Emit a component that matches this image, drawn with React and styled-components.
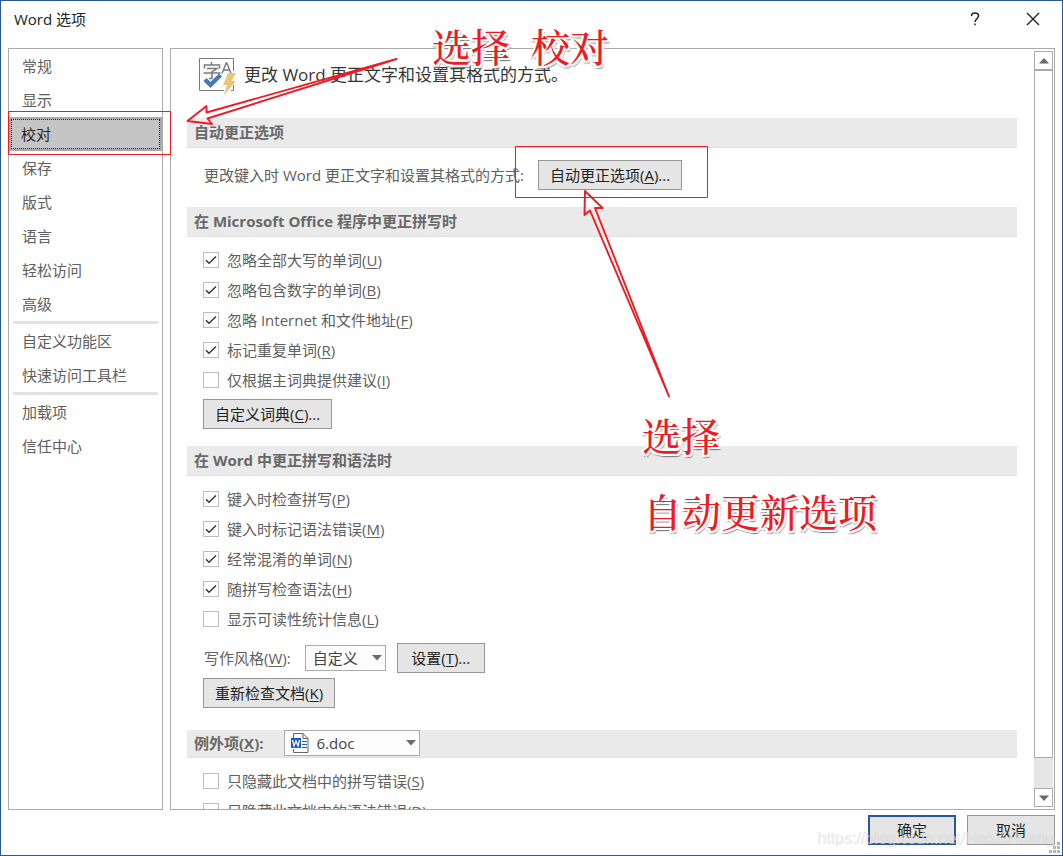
import React from "react";
import styled, { createGlobalStyle, css } from "styled-components";

const ui = `"Open Sans", "Noto Sans CJK SC", sans-serif`;

const GlobalStyle = createGlobalStyle`
  *, *::before, *::after { box-sizing: border-box; }
  body { margin: 0; background: #fff; }
  body, button, select, input { font-family: ${ui}; font-size: 15px; }
  u { text-decoration-thickness: 1px; text-underline-offset: 2px; }
`;

const Dialog = styled.main`
  position: relative;
  display: flex;
  flex-direction: column;
  height: 100vh;
  overflow: hidden;
  border: 1px solid #2b579a;
  background: #fff;
  color: #606060;
`;

const TitleBar = styled.header`
  display: flex;
  align-items: center;
  height: 47px;
  flex: none;
  padding: 0 15px 12px 13px;
`;

const Title = styled.h1`
  flex: 1;
  margin: 0;
  font-size: 15px;
  font-weight: 400;
  line-height: 20px;
  color: #222;
`;

const WindowButton = styled.button`
  display: flex;
  align-items: center;
  justify-content: center;
  width: 28px;
  height: 28px;
  margin-left: 30px;
  padding: 0;
  border: 0;
  background: none;
  color: #222;
`;

const Body = styled.div`
  display: flex;
  flex: 1;
  min-height: 0;
  gap: 7px;
  padding: 0 7px;
`;

const Nav = styled.nav`
  flex: none;
  width: 155px;
  border: 1px solid #ababab;
`;

const NavItem = styled.button`
  display: block;
  width: 100%;
  height: 34px;
  padding: 0 11px;
  border: 2px solid transparent;
  background: none;
  color: #606060;
  line-height: 30px;
  text-align: left;
  ${(p) =>
    p.$active &&
    css`
      padding-left: 10px;
      border-color: #ababab;
      background: #c5c5c5;
      color: #262626;
      outline: 1px dotted #222;
      outline-offset: -3px;
    `}
`;

const NavRule = styled.hr`
  height: 3px;
  margin: 0 4px;
  border: 0;
  background: #e2e2e2;
`;

const Pane = styled.div`
  display: flex;
  flex: 1;
  min-width: 0;
  border: 1px solid #ababab;
`;

const Content = styled.div`
  flex: 1;
  min-width: 0;
  overflow: hidden;
  padding: 0 17px 0 16px;
`;

const Intro = styled.div`
  display: flex;
  align-items: flex-start;
  gap: 5px;
  height: 69px;
  padding: 9px 12px 0;
  font-size: 17px;
  line-height: 34px;
  color: #363636;
  white-space: nowrap;
`;

const SectionBar = styled.h2`
  display: flex;
  align-items: center;
  gap: 20px;
  height: ${(p) => (p.$compact ? 28 : 30)}px;
  margin: 0;
  padding: 0 7px 2px;
  border-bottom: 1px solid #e0e0e0;
  background: #eaeaea;
  font-size: 15px;
  font-weight: 700;
  color: #686868;
`;

const SectionBody = styled.div`
  padding: ${(p) => p.$pad} 0 ${(p) => p.$end || "17px"} 16px;
`;

const Row = styled.div`
  display: flex;
  align-items: center;
  gap: 11px;
  height: 30px;
  margin-top: ${(p) => p.$top || 0}px;
  white-space: nowrap;
`;

const RowLabel = styled.label`
  padding: 0 3px 2px 1px;
`;

const PushButton = styled.button`
  height: 30px;
  padding: 0 11px;
  min-width: ${(p) => p.$min || 0}px;
  border: 1px solid #969696;
  background: #e5e5e5;
  color: #222;
  line-height: 28px;
  white-space: nowrap;
  ${(p) =>
    p.$primary &&
    css`
      border: 2px solid #2b579a;
      line-height: 26px;
    `}
`;

const CheckRow = styled.label`
  display: flex;
  align-items: center;
  gap: 8px;
  height: 30px;
  white-space: nowrap;
`;

const CheckText = styled.span`
  padding-bottom: 2px;
`;

const CheckWrap = styled.span`
  display: grid;
  width: 16px;
  height: 16px;
  > * {
    grid-area: 1 / 1;
  }
  svg {
    pointer-events: none;
  }
  input:not(:checked) + svg {
    visibility: hidden;
  }
`;

const CheckInput = styled.input`
  appearance: none;
  width: 16px;
  height: 16px;
  margin: 0;
  border: 1px solid #bdbdbd;
  background: #fff;
`;

const SelectWrap = styled.span`
  position: relative;
  display: flex;
  width: ${(p) => p.$width}px;
  height: 26px;
`;

const SelectBox = styled.select`
  appearance: none;
  width: 100%;
  padding: 0 24px 0 ${(p) => (p.$icon ? 32 : 7)}px;
  border: 1px solid #ababab;
  border-radius: 0;
  background: #fdfdfd;
  color: #444;
`;

const SelectArrow = styled.svg`
  position: absolute;
  top: 10px;
  right: 4px;
  pointer-events: none;
`;

const SelectIcon = styled.svg`
  position: absolute;
  top: 2px;
  left: 6px;
  pointer-events: none;
`;

const ScrollBar = styled.div`
  display: flex;
  flex-direction: column;
  flex: none;
  width: 19px;
  margin: 2px 1px 2px 0;
  background: #e6e6e6;
`;

const ScrollButton = styled.button`
  display: flex;
  align-items: center;
  justify-content: center;
  height: 19px;
  padding: 0;
  border: 1px solid #ababab;
  background: #fff;
`;

const ScrollThumb = styled.div`
  flex: 1;
  margin-bottom: 30px;
  border: 1px solid #ababab;
  background: #fff;
`;

const Footer = styled.footer`
  display: flex;
  justify-content: flex-end;
  flex: none;
  gap: 11px;
  padding: 5px 7px 10px;
`;

const Grip = styled.svg`
  position: absolute;
  right: 1px;
  bottom: 1px;
`;

const Watermark = styled.div`
  position: absolute;
  right: 7px;
  bottom: 6px;
  font: 16px/20px "Liberation Sans", sans-serif;
  color: rgba(255, 255, 255, 0.6);
  text-shadow: 0 0 1px rgba(0, 0, 0, 0.2);
  pointer-events: none;
`;

const Markup = styled.svg`
  position: absolute;
  top: -1px;
  left: -1px;
  pointer-events: none;
`;

const Note = styled.div`
  position: absolute;
  top: ${(p) => p.$y}px;
  left: ${(p) => p.$x}px;
  display: flex;
  gap: 21px;
  font: 500 39px/40px "Liberation Serif", "Noto Serif CJK SC", "Noto Sans CJK SC", serif;
  color: #ed1c24;
  white-space: nowrap;
  pointer-events: none;
  text-shadow: -2px 0 #fff, 2px 0 #fff, 0 -2px #fff, 0 2px #fff, -1px -1px #fff,
    2px 2px #fff, -2px 2px #fff, 2px 3px 1px #777, -1px 3px 1px #999;
`;

function Key({ text, k, tail = "" }) {
  return (
    <span>
      {text}(<u>{k}</u>){tail}
    </span>
  );
}

function Check({ text, k, on }) {
  return (
    <CheckRow>
      <CheckWrap>
        <CheckInput type="checkbox" defaultChecked={on} />
        <svg width="16" height="16" viewBox="0 0 16 16" fill="none" stroke="#333" strokeWidth="1.4">
          <path d="M3 8.2 6 11.2 13 4.4" />
        </svg>
      </CheckWrap>
      <CheckText>
        <Key text={text} k={k} />
      </CheckText>
    </CheckRow>
  );
}

function Triangle({ up }) {
  return (
    <svg width="10" height="6" viewBox="0 0 10 6" fill="#6a6a6a">
      <path d={up ? "M0 5.5h10L5 0z" : "M0 .5h10L5 6z"} />
    </svg>
  );
}

function Dropdown({ id, width, icon, value }) {
  return (
    <SelectWrap $width={width}>
      <SelectBox id={id} $icon={!!icon} defaultValue={value}>
        <option>{value}</option>
      </SelectBox>
      {icon}
      <SelectArrow width="10" height="6" viewBox="0 0 10 6" fill="#6a6a6a">
        <path d="M0 0h10L5 5.5z" />
      </SelectArrow>
    </SelectWrap>
  );
}

function ProofingIcon() {
  return (
    <svg width="40" height="40" viewBox="0 0 40 40" fill="none">
      <path d="M34.500 13V.5H.5v32H25M32 32.500h2.500V27" stroke="#7a7a7a" />
      <g stroke="#7a7a7a" strokeWidth="1.500">
        <path d="M12.500 4v3M5.500 10.500V7h15v3.500M8 10.500h10L13 14v6.500h-3M4.500 15h17" />
        <path d="m23 15.500 4.200-10.500h.6L32 15.500M24.500 12h6" />
      </g>
      <path d="M6 21.500 11.500 27 21.500 17" stroke="#447ab8" strokeWidth="4.400" />
      <path d="M29 15h8l-4.500 8H37L24.500 38l3.500-11h-4z" fill="#ecc478" />
    </svg>
  );
}

function DocIcon() {
  return (
    <SelectIcon width="20" height="22" viewBox="0 0 20 22" fill="none">
      <path d="M3.500 6V1.500h9.500l5 5v14H3.500V17M13 1.500v5h5" stroke="#666" />
      <path d="M12 9.500h5M12 12.500h5M12 15.500h5" stroke="#185abd" />
      <path d="M1 6h10v10H1z" fill="#185abd" />
      <path d="m2.500 8 1.500 6 2-5 2 5 1.500-6" stroke="#fff" strokeWidth="1.300" />
    </SelectIcon>
  );
}

const NAV = [
  ["常规", "显示", "校对", "保存", "版式", "语言", "轻松访问", "高级"],
  ["自定义功能区", "快速访问工具栏"],
  ["加载项", "信任中心"],
];

export default function App() {
  return (
    <Dialog lang="zh-CN">
      <GlobalStyle />
      <TitleBar>
        <Title>Word 选项</Title>
        <WindowButton aria-label="帮助">
          <svg width="10" height="14" viewBox="0 0 10 14" fill="none" stroke="#222" strokeWidth="1.500">
            <path d="M1.500 4c0-4 7-4 7 0 0 2.500-3.500 3-3.500 6M5 11.500v1.800" />
          </svg>
        </WindowButton>
        <WindowButton aria-label="关闭">
          <svg width="14" height="14" viewBox="0 0 14 14" stroke="#222" strokeWidth="1.400">
            <path d="m1 1 12 12M13 1 1 13" />
          </svg>
        </WindowButton>
      </TitleBar>

      <Body>
        <Nav>
          {NAV.map((group, i) => (
            <React.Fragment key={i}>
              {i > 0 && <NavRule />}
              {group.map((name) => (
                <NavItem key={name} $active={name === "校对"}>
                  {name}
                </NavItem>
              ))}
            </React.Fragment>
          ))}
        </Nav>

        <Pane>
          <Content>
            <Intro>
              <ProofingIcon />
              更改 Word 更正文字和设置其格式的方式。
            </Intro>

            <SectionBar>自动更正选项</SectionBar>
            <SectionBody $pad="12px">
              <Row>
                <RowLabel htmlFor="autocorrect">更改键入时 Word 更正文字和设置其格式的方式:</RowLabel>
                <PushButton id="autocorrect">
                  <Key text="自动更正选项" k="A" tail="..." />
                </PushButton>
              </Row>
            </SectionBody>

            <SectionBar>在 Microsoft Office 程序中更正拼写时</SectionBar>
            <SectionBody $pad="8px">
              <Check text="忽略全部大写的单词" k="U" on />
              <Check text="忽略包含数字的单词" k="B" on />
              <Check text="忽略 Internet 和文件地址" k="F" on />
              <Check text="标记重复单词" k="R" on />
              <Check text="仅根据主词典提供建议" k="I" />
              <Row $top={4}>
                <PushButton>
                  <Key text="自定义词典" k="C" tail="..." />
                </PushButton>
              </Row>
            </SectionBody>

            <SectionBar>在 Word 中更正拼写和语法时</SectionBar>
            <SectionBody $pad="8px" $end="22px">
              <Check text="键入时检查拼写" k="P" on />
              <Check text="键入时标记语法错误" k="M" on />
              <Check text="经常混淆的单词" k="N" on />
              <Check text="随拼写检查语法" k="H" on />
              <Check text="显示可读性统计信息" k="L" />
              <Row $top={9}>
                <RowLabel htmlFor="style">
                  <Key text="写作风格" k="W" tail=":" />
                </RowLabel>
                <Dropdown id="style" width={81} value="自定义" />
                <PushButton $min={88}>
                  <Key text="设置" k="T" tail="..." />
                </PushButton>
              </Row>
              <Row $top={5}>
                <PushButton>
                  <Key text="重新检查文档" k="K" />
                </PushButton>
              </Row>
            </SectionBody>

            <SectionBar $compact>
              <label htmlFor="scope">
                <Key text="例外项" k="X" tail=":" />
              </label>
              <Dropdown id="scope" width={136} value="6.doc" icon={<DocIcon />} />
            </SectionBar>
            <SectionBody $pad="8px">
              <Check text="只隐藏此文档中的拼写错误" k="S" />
              <Check text="只隐藏此文档中的语法错误" k="D" />
            </SectionBody>
          </Content>

          <ScrollBar>
            <ScrollButton aria-label="向上滚动">
              <Triangle up />
            </ScrollButton>
            <ScrollThumb />
            <ScrollButton aria-label="向下滚动">
              <Triangle />
            </ScrollButton>
          </ScrollBar>
        </Pane>
      </Body>

      <Footer>
        <PushButton $primary $min={88}>
          确定
        </PushButton>
        <PushButton $min={88}>取消</PushButton>
      </Footer>

      <Watermark>https://blog.csdn.net/HaoZiHuang</Watermark>
      <Grip width="12" height="12" viewBox="0 0 12 12" fill="#b5b5b5">
        <path d="M8 0h3v3H8zM8 4h3v3H8zM4 4h3v3H4zM8 8h3v3H8zM4 8h3v3H4zM0 8h3v3H0z" />
      </Grip>

      <Markup width="720" height="410" viewBox="0 0 720 410" fill="none" stroke="#ed1c24">
        <path d="M8.500 111.500h162v43H8.500zM515.500 146.500h192v51h-192z" />
        <path
          d="M187.500 121 206.500 106v6.500L396.500 59 207.500 118.500 212 124zM585 191l17.500 17h-7.500L669 396.500 590 210.500l-5.500 4.500z"
          strokeWidth="1.900"
          strokeLinejoin="round"
        />
      </Markup>
      <Note $x={431} $y={28}>
        <span>选择</span>
        <span>校对</span>
      </Note>
      <Note $x={641} $y={417}>选择</Note>
      <Note $x={642} $y={493}>自动更新选项</Note>
    </Dialog>
  );
}
